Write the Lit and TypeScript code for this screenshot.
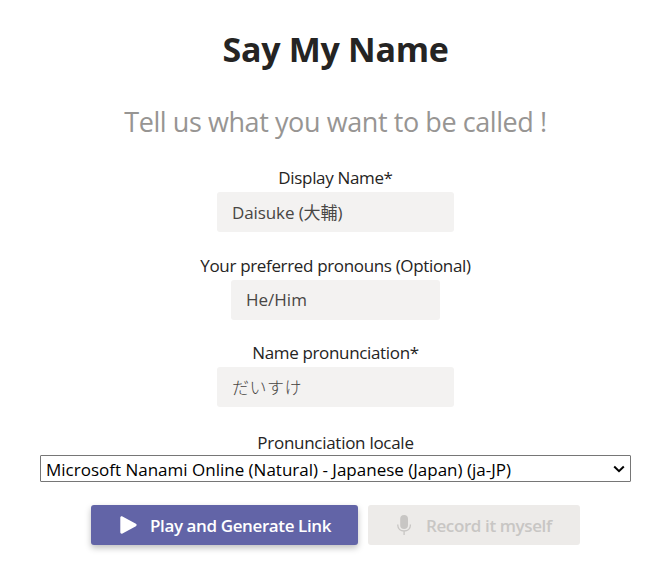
import { LitElement, html, css, svg } from "lit";
import { customElement, property } from "lit/decorators.js";

@customElement("name-field")
class NameField extends LitElement {
  @property() label = "";
  @property() value = "";

  static styles = css`
    :host { display: flex; flex-direction: column; align-items: center; }
    label { height: 28px; line-height: 28px; white-space: nowrap; letter-spacing: -.34px; }
    input {
      box-sizing: border-box; width: var(--field-width, 237px); height: 40px; margin: 0; padding: 0 15px 2px 15px;
      border: 0; border-radius: 3px; background: #f3f2f1; color: #484644; outline: none;
      font: inherit; font-weight: var(--value-weight, 400); letter-spacing: var(--value-spacing, -.1px);
    }
  `;

  render() {
    return html`<label for="f">${this.label}</label><input id="f" .value=${this.value} />`;
  }
}

const playIcon = svg`<path d="M.3 1.8C.3 .5 1.4 0 2.5 .6L15.9 7.8C16.9 8.4 16.9 9.6 15.9 10.2L2.5 17.4C1.4 18 .3 17.4 .3 16.2Z" fill="currentColor"/>`;
const micIcon = svg`<rect x="3.2" y="0" width="7.8" height="14" rx="3.9" fill="currentColor"/>
  <path d="M.8 9.5V10.3C.8 13.8 3.6 16 7.1 16S13.4 13.8 13.4 10.3V9.5M7.1 16V20" fill="none" stroke="currentColor" stroke-width="1.3"/>`;

@customElement("app-root")
class AppRoot extends LitElement {
  static styles = css`
    :host {
      display: flex; flex-direction: column; align-items: center; box-sizing: border-box;
      width: 100%; height: 568px; padding: 24px 40px 0; overflow: hidden; background: #fff; color: #252423;
      font-family: "Open Sans", "Noto Sans CJK JP", sans-serif; font-size: 17px;
    }
    h1 { margin: 0; height: 50px; line-height: 50px; font-size: 34px; font-weight: 700; white-space: nowrap; letter-spacing: -.3px; }
    h2 { margin: 28px 0 0; height: 40px; line-height: 40px; font-size: 27px; font-weight: 400; color: #979593; white-space: nowrap; letter-spacing: -.42px; }
    .display { margin-top: 22px; }
    .pronouns { margin-top: 20px; --field-width: 209px; --value-spacing: 0; }
    .spoken { margin-top: 19px; --value-spacing: .5px; --value-weight: 300; }
    .locale-label { margin-top: 22px; height: 26px; line-height: 28px; white-space: nowrap; letter-spacing: -.28px; }
    .picker { display: grid; width: 591px; height: 27px; align-items: center; }
    select {
      grid-area: 1 / 1; box-sizing: border-box; width: 591px; height: 27px; margin: 0; padding: 1px 24px 0 5px;
      appearance: none; border: 1px solid #767676; border-radius: 1px; background: #fff; color: #000;
      font: inherit; letter-spacing: 0;
    }
    .chevron { grid-area: 1 / 1; justify-self: end; margin-right: 6px; width: 12px; height: 8px; pointer-events: none; }
    .actions { display: flex; gap: 10px; margin-top: 23px; }
    button {
      display: flex; align-items: center; box-sizing: border-box; height: 40px; margin: 0; border: 0; border-radius: 3px;
      font: inherit; font-weight: 600; white-space: nowrap; letter-spacing: -.39px;
    }
    .play { width: 267px; padding: 0 0 0 29px; gap: 12px; background: #6264a7; color: #fff; box-shadow: 0 3px 6px rgba(0, 0, 0, .25); }
    .record { width: 212px; padding: 0 0 0 29px; gap: 14px; background: #edebe9; color: #c8c6c4; }
    .play-icon { width: 18px; height: 18px; }
    .mic-icon { width: 15px; height: 20px; }
  `;

  render() {
    return html`
      <h1>Say My Name</h1>
      <h2>Tell us what you want to be called !</h2>
      <name-field class="display" label="Display Name*" value="Daisuke (大輔)"></name-field>
      <name-field class="pronouns" label="Your preferred pronouns (Optional)" value="He/Him"></name-field>
      <name-field class="spoken" label="Name pronunciation*" value="だいすけ"></name-field>
      <label class="locale-label" for="locale">Pronunciation locale</label>
      <div class="picker">
        <select id="locale"><option>Microsoft Nanami Online (Natural) - Japanese (Japan) (ja-JP)</option></select>
        <svg class="chevron" viewBox="0 0 12 8"><path d="M1.2 1.5L6 6.2L10.8 1.5" fill="none" stroke="#000" stroke-width="2"/></svg>
      </div>
      <div class="actions">
        <button class="play"><svg class="play-icon" viewBox="0 0 18 18">${playIcon}</svg><span>Play and Generate Link</span></button>
        <button class="record" disabled><svg class="mic-icon" viewBox="0 0 15 20">${micIcon}</svg><span>Record it myself</span></button>
      </div>
    `;
  }
}
